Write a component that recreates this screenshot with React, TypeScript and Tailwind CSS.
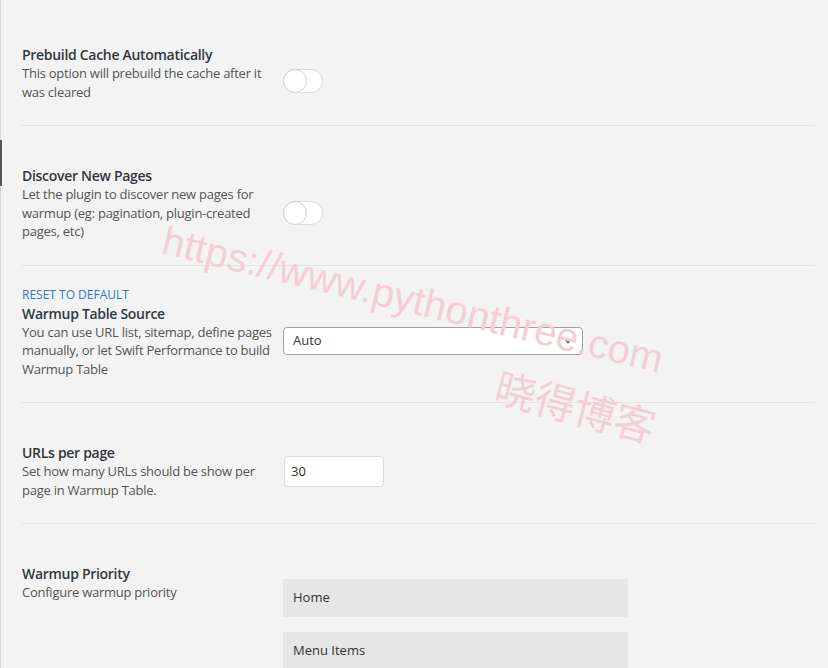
import { useState } from "react";

const font = { fontFamily: '"Open Sans", "Noto Sans", Arial, sans-serif' };

function Toggle({ className = "" }: { className?: string }) {
  const [on, setOn] = useState(false);
  return (
    <button
      type="button"
      onClick={() => setOn(!on)}
      className={
        "relative h-[24px] w-[40px] shrink-0 rounded-full border border-[#dcdcdc] bg-white " + className
      }
    >
      <span
        className={
          "absolute top-[-1px] h-[24px] w-[24px] rounded-full border border-[#cfcfcf] bg-white " +
          (on ? "left-[15px]" : "left-[-1px]")
        }
      />
    </button>
  );
}

function Label({ title, desc }: { title: string; desc: string }) {
  return (
    <div className="w-[261px] shrink-0">
      <p className="text-[14px] font-semibold leading-[19px] tracking-[-0.3px] text-[#32373c]">{title}</p>
      <p className="text-[13px] leading-[18.5px] tracking-[-0.25px] text-[#555]">{desc}</p>
    </div>
  );
}

export default function App() {
  return (
    <div className="relative flex min-h-[668px] w-full overflow-hidden bg-[#f3f3f3]" style={font}>
      {/* admin side rail */}
      <div className="flex w-[2px] shrink-0 flex-col">
        <div className="h-[140px] w-[1px] bg-[#d8d8d8]" />
        <div className="h-[46px] w-[2px] bg-[#555]" />
        <div className="w-[1px] flex-1 bg-[#d8d8d8]" />
      </div>

      <div className="ml-[20px] w-[793px] pt-[5px]">
        {/* Prebuild */}
        <div className="flex items-center border-b border-[#e3e3e3] pb-[24px] pt-[40px]">
          <Label
            title="Prebuild Cache Automatically"
            desc="This option will prebuild the cache after it was cleared"
          />
          <Toggle className="mt-[16px]" />
        </div>

        {/* Discover */}
        <div className="flex items-center border-b border-[#e3e3e3] pb-[24px] pt-[40px]">
          <Label
            title="Discover New Pages"
            desc="Let the plugin to discover new pages for warmup (eg: pagination, plugin-created pages, etc)"
          />
          <Toggle className="mt-[20px]" />
        </div>

        {/* Warmup table source */}
        <div className="border-b border-[#e3e3e3] pb-[24px] pt-[19px]">
          <a href="#" className="block text-[12px] leading-[19px] text-[#2c7bc3]">
            RESET TO DEFAULT
          </a>
          <div className="flex items-center">
            <Label
              title="Warmup Table Source"
              desc="You can use URL list, sitemap, define pages manually, or let Swift Performance to build Warmup Table"
            />
            <div className="relative flex h-[28px] w-[300px] items-center rounded-[4px] border border-[#a0a0a0] bg-white pl-[9px] text-[13px] text-[#333]">
              Auto
              <svg
                className="absolute right-[10px] top-[11px]"
                width="8"
                height="5"
                viewBox="0 0 8 5"
              >
                <path d="M0 0h8L4 5z" fill="#7a7a7a" />
              </svg>
            </div>
          </div>
        </div>

        {/* URLs per page */}
        <div className="flex items-center border-b border-[#e3e3e3] pb-[24px] pt-[40px]">
          <Label
            title="URLs per page"
            desc="Set how many URLs should be show per page in Warmup Table."
          />
          <input
            defaultValue="30"
            className="ml-[1px] h-[31px] w-[100px] rounded-[4px] border border-[#dcdcdc] bg-white px-[6px] text-[13px] text-[#333] outline-none"
          />
        </div>

        {/* Priority */}
        <div className="flex items-start pt-[40px]">
          <Label title="Warmup Priority" desc="Configure warmup priority" />
          <div className="mt-[15px] flex flex-col gap-[15px]">
            {["Home", "Menu Items"].map((item) => (
              <div
                key={item}
                className="flex h-[38px] w-[345px] items-center bg-[#e6e6e6] px-[10px] text-[13px] font-medium text-[#333]"
              >
                {item}
              </div>
            ))}
          </div>
        </div>
      </div>

      {/* watermark */}
      <div className="pointer-events-none absolute inset-0 select-none">
        <span
          className="absolute left-[168px] top-[220px] origin-top-left rotate-[13.5deg] whitespace-nowrap text-[40px] leading-none text-[#f3cfd5]"
          style={{ fontFamily: '"Liberation Sans", Arial, sans-serif' }}
        >
          https://www.pythonthree.com
        </span>
        <span
          className="absolute left-[502px] top-[364px] origin-top-left rotate-[15deg] whitespace-nowrap text-[41px] leading-none text-[#f3cfd5]"
          style={{ fontFamily: '"Noto Sans CJK SC", sans-serif' }}
        >
          晓得博客
        </span>
      </div>
    </div>
  );
}
